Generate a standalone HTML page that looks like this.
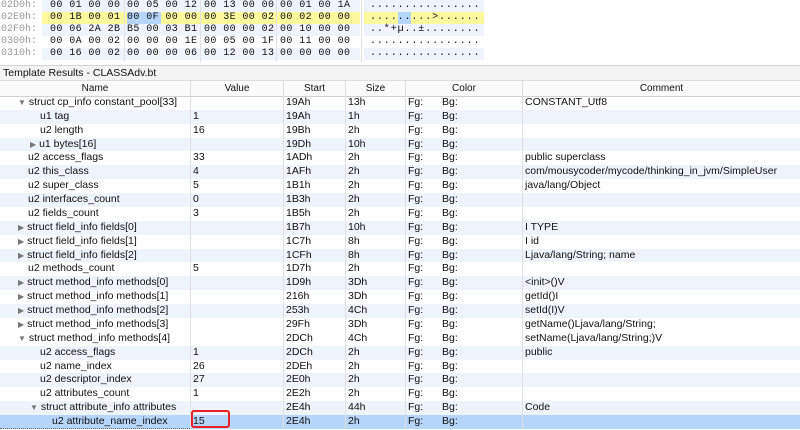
<!DOCTYPE html><html><head><style>
body{margin:0;width:800px;height:430px;overflow:hidden;background:#fff;font-family:"Liberation Sans",sans-serif;font-size:10.5px;color:#111;position:relative}
.hex{position:absolute;left:0;top:0;width:800px;height:62px;font-family:"Liberation Mono",monospace;font-size:10px}
.hr{position:absolute;left:0;height:12px;line-height:12px;width:800px}
.off{position:absolute;left:1px;color:#999}
.hb{position:absolute;left:42px;width:318px;height:12px}
.ab{position:absolute;left:364px;width:120px;height:12px}
.bt{position:absolute;white-space:pre;letter-spacing:0.4px}
.as{position:absolute;left:370px;white-space:pre;letter-spacing:0.9px}
.vl{position:absolute;top:0;height:62px;width:1px;background:#e2e2e2}
.title{position:absolute;left:0;top:65px;width:800px;height:15px;line-height:15px;background:#f3f3f3;border-top:1px solid #d4d4d4;padding-left:3px;font-size:10.5px}
.head{position:absolute;left:0;top:80px;width:800px;height:15px;line-height:15px;background:#fafafa;border-bottom:1px solid #d0d0d0;border-top:1px solid #ddd;font-size:10px}
.head div,.r div{position:absolute;top:0;height:100%}
.head div{text-align:center;border-right:1px solid #ddd}
.r{position:absolute;left:0;width:800px;height:13.87px;line-height:13.87px}
.c1{left:0}.c2{left:193px}.c3{left:286px}.c4{left:348px}.c5{left:408px}.c5b{left:442px}.c6{left:525px}
.g{position:absolute;top:95px;height:335px;width:1px;background:#e0e0e0}
.tri{color:#777;font-size:8px}
</style></head><body>
<div class="hex">
<div class="hr" style="top:0"><div class="hb" style="background:#eef3fc"></div><div class="ab" style="background:#eef3fc"></div><span class="off">02D0h:</span><span class="bt" style="left:50px">00 01 00 00</span><span class="bt" style="left:127px">00 05 00 12</span><span class="bt" style="left:204px">00 13 00 00</span><span class="bt" style="left:280px">00 01 00 1A</span><span class="as">................</span></div>
<div class="hr" style="top:12px"><div class="hb" style="background:#fdfa9e"></div><div class="ab" style="background:#fdfa9e"></div><div style="position:absolute;left:127px;width:34px;height:12px;background:#b5d5fb"></div><div style="position:absolute;left:398px;width:13px;height:12px;background:#b5d5fb"></div><span class="off">02E0h:</span><span class="bt" style="left:50px">00 1B 00 01</span><span class="bt" style="left:127px">00 0F 00 00</span><span class="bt" style="left:204px">00 3E 00 02</span><span class="bt" style="left:280px">00 02 00 00</span><span class="as">.........&gt;......</span></div>
<div class="hr" style="top:24px"><div class="hb" style="background:#eef3fc"></div><div class="ab" style="background:#eef3fc"></div><span class="off">02F0h:</span><span class="bt" style="left:50px">00 06 2A 2B</span><span class="bt" style="left:127px">B5 00 03 B1</span><span class="bt" style="left:204px">00 00 00 02</span><span class="bt" style="left:280px">00 10 00 00</span><span class="as">..*+µ..±........</span></div>
<div class="hr" style="top:36px"><span class="off">0300h:</span><span class="bt" style="left:50px">00 0A 00 02</span><span class="bt" style="left:127px">00 00 00 1E</span><span class="bt" style="left:204px">00 05 00 1F</span><span class="bt" style="left:280px">00 11 00 00</span><span class="as">................</span></div>
<div class="hr" style="top:48px"><div class="hb" style="background:#eef3fc"></div><div class="ab" style="background:#eef3fc"></div><span class="off">0310h:</span><span class="bt" style="left:50px">00 16 00 02</span><span class="bt" style="left:127px">00 00 00 06</span><span class="bt" style="left:204px">00 12 00 13</span><span class="bt" style="left:280px">00 00 00 00</span><span class="as">................</span></div>
<div class="vl" style="left:124px"></div><div class="vl" style="left:200px"></div><div class="vl" style="left:276px"></div><div class="vl" style="left:361px"></div>
</div>
<div class="title">Template Results - CLASSAdv.bt</div>
<div class="head"><div style="left:0;width:190px">Name</div><div style="left:191px;width:92px">Value</div><div style="left:284px;width:61px">Start</div><div style="left:346px;width:59px">Size</div><div style="left:406px;width:116px">Color</div><div style="left:523px;width:277px;border:0">Comment</div></div>
<div style="position:absolute;top:96px;left:0;width:800px;height:334px">
<div class="r" style="top:0"><div class="c1" style="left:18px"><span class="tri">▼</span> struct cp_info constant_pool[33]</div><div class="c3">19Ah</div><div class="c4">13h</div><div class="c5">Fg:</div><div class="c5b">Bg:</div><div class="c6">CONSTANT_Utf8</div></div>
<div class="r" style="top:13.87px;background:#eef3fc"><div class="c1" style="left:40px">u1 tag</div><div class="c2">1</div><div class="c3">19Ah</div><div class="c4">1h</div><div class="c5">Fg:</div><div class="c5b">Bg:</div></div>
<div class="r" style="top:27.74px;background:#fff"><div class="c1" style="left:40px">u2 length</div><div class="c2">16</div><div class="c3">19Bh</div><div class="c4">2h</div><div class="c5">Fg:</div><div class="c5b">Bg:</div></div>
<div class="r" style="top:41.61px;background:#eef3fc"><div class="c1" style="left:30px"><span class="tri">▶</span> u1 bytes[16]</div><div class="c3">19Dh</div><div class="c4">10h</div><div class="c5">Fg:</div><div class="c5b">Bg:</div></div>
<div class="r" style="top:55.48px;background:#fff"><div class="c1" style="left:28px">u2 access_flags</div><div class="c2">33</div><div class="c3">1ADh</div><div class="c4">2h</div><div class="c5">Fg:</div><div class="c5b">Bg:</div><div class="c6">public superclass</div></div>
<div class="r" style="top:69.35px;background:#eef3fc"><div class="c1" style="left:28px">u2 this_class</div><div class="c2">4</div><div class="c3">1AFh</div><div class="c4">2h</div><div class="c5">Fg:</div><div class="c5b">Bg:</div><div class="c6">com/mousycoder/mycode/thinking_in_jvm/SimpleUser</div></div>
<div class="r" style="top:83.22px;background:#fff"><div class="c1" style="left:28px">u2 super_class</div><div class="c2">5</div><div class="c3">1B1h</div><div class="c4">2h</div><div class="c5">Fg:</div><div class="c5b">Bg:</div><div class="c6">java/lang/Object</div></div>
<div class="r" style="top:97.09px;background:#eef3fc"><div class="c1" style="left:28px">u2 interfaces_count</div><div class="c2">0</div><div class="c3">1B3h</div><div class="c4">2h</div><div class="c5">Fg:</div><div class="c5b">Bg:</div></div>
<div class="r" style="top:110.96px;background:#fff"><div class="c1" style="left:28px">u2 fields_count</div><div class="c2">3</div><div class="c3">1B5h</div><div class="c4">2h</div><div class="c5">Fg:</div><div class="c5b">Bg:</div></div>
<div class="r" style="top:124.83px;background:#eef3fc"><div class="c1" style="left:18px"><span class="tri">▶</span> struct field_info fields[0]</div><div class="c3">1B7h</div><div class="c4">10h</div><div class="c5">Fg:</div><div class="c5b">Bg:</div><div class="c6">I TYPE</div></div>
<div class="r" style="top:138.7px;background:#fff"><div class="c1" style="left:18px"><span class="tri">▶</span> struct field_info fields[1]</div><div class="c3">1C7h</div><div class="c4">8h</div><div class="c5">Fg:</div><div class="c5b">Bg:</div><div class="c6">I id</div></div>
<div class="r" style="top:152.57px;background:#eef3fc"><div class="c1" style="left:18px"><span class="tri">▶</span> struct field_info fields[2]</div><div class="c3">1CFh</div><div class="c4">8h</div><div class="c5">Fg:</div><div class="c5b">Bg:</div><div class="c6">Ljava/lang/String; name</div></div>
<div class="r" style="top:166.44px;background:#fff"><div class="c1" style="left:28px">u2 methods_count</div><div class="c2">5</div><div class="c3">1D7h</div><div class="c4">2h</div><div class="c5">Fg:</div><div class="c5b">Bg:</div></div>
<div class="r" style="top:180.31px;background:#eef3fc"><div class="c1" style="left:18px"><span class="tri">▶</span> struct method_info methods[0]</div><div class="c3">1D9h</div><div class="c4">3Dh</div><div class="c5">Fg:</div><div class="c5b">Bg:</div><div class="c6">&lt;init&gt;()V</div></div>
<div class="r" style="top:194.18px;background:#fff"><div class="c1" style="left:18px"><span class="tri">▶</span> struct method_info methods[1]</div><div class="c3">216h</div><div class="c4">3Dh</div><div class="c5">Fg:</div><div class="c5b">Bg:</div><div class="c6">getId()I</div></div>
<div class="r" style="top:208.05px;background:#eef3fc"><div class="c1" style="left:18px"><span class="tri">▶</span> struct method_info methods[2]</div><div class="c3">253h</div><div class="c4">4Ch</div><div class="c5">Fg:</div><div class="c5b">Bg:</div><div class="c6">setId(I)V</div></div>
<div class="r" style="top:221.92px;background:#fff"><div class="c1" style="left:18px"><span class="tri">▶</span> struct method_info methods[3]</div><div class="c3">29Fh</div><div class="c4">3Dh</div><div class="c5">Fg:</div><div class="c5b">Bg:</div><div class="c6">getName()Ljava/lang/String;</div></div>
<div class="r" style="top:235.79px;background:#fff"><div class="c1" style="left:18px"><span class="tri">▼</span> struct method_info methods[4]</div><div class="c3">2DCh</div><div class="c4">4Ch</div><div class="c5">Fg:</div><div class="c5b">Bg:</div><div class="c6">setName(Ljava/lang/String;)V</div></div>
<div class="r" style="top:249.66px;background:#eef3fc"><div class="c1" style="left:40px">u2 access_flags</div><div class="c2">1</div><div class="c3">2DCh</div><div class="c4">2h</div><div class="c5">Fg:</div><div class="c5b">Bg:</div><div class="c6">public</div></div>
<div class="r" style="top:263.53px;background:#fff"><div class="c1" style="left:40px">u2 name_index</div><div class="c2">26</div><div class="c3">2DEh</div><div class="c4">2h</div><div class="c5">Fg:</div><div class="c5b">Bg:</div></div>
<div class="r" style="top:277.4px;background:#eef3fc"><div class="c1" style="left:40px">u2 descriptor_index</div><div class="c2">27</div><div class="c3">2E0h</div><div class="c4">2h</div><div class="c5">Fg:</div><div class="c5b">Bg:</div></div>
<div class="r" style="top:291.27px;background:#fff"><div class="c1" style="left:40px">u2 attributes_count</div><div class="c2">1</div><div class="c3">2E2h</div><div class="c4">2h</div><div class="c5">Fg:</div><div class="c5b">Bg:</div></div>
<div class="r" style="top:305.14px;background:#eef3fc"><div class="c1" style="left:30px"><span class="tri">▼</span> struct attribute_info attributes</div><div class="c3">2E4h</div><div class="c4">44h</div><div class="c5">Fg:</div><div class="c5b">Bg:</div><div class="c6">Code</div></div>
<div class="r" style="top:319.01px;background:#b6d5fb"><div class="c1" style="left:52px">u2 attribute_name_index</div><div class="c2">15</div><div class="c3">2E4h</div><div class="c4">2h</div><div class="c5">Fg:</div><div class="c5b">Bg:</div></div>
</div>
<div style="position:absolute;left:0;top:428px;width:190px;border-top:1px dotted #666"></div>
<div style="position:absolute;left:191px;top:410px;width:35px;height:14px;border:2px solid #e8202a;border-radius:3px"></div>
<div class="g" style="left:190px"></div><div class="g" style="left:283px"></div><div class="g" style="left:345px"></div><div class="g" style="left:405px"></div><div class="g" style="left:522px"></div>
</body></html>
